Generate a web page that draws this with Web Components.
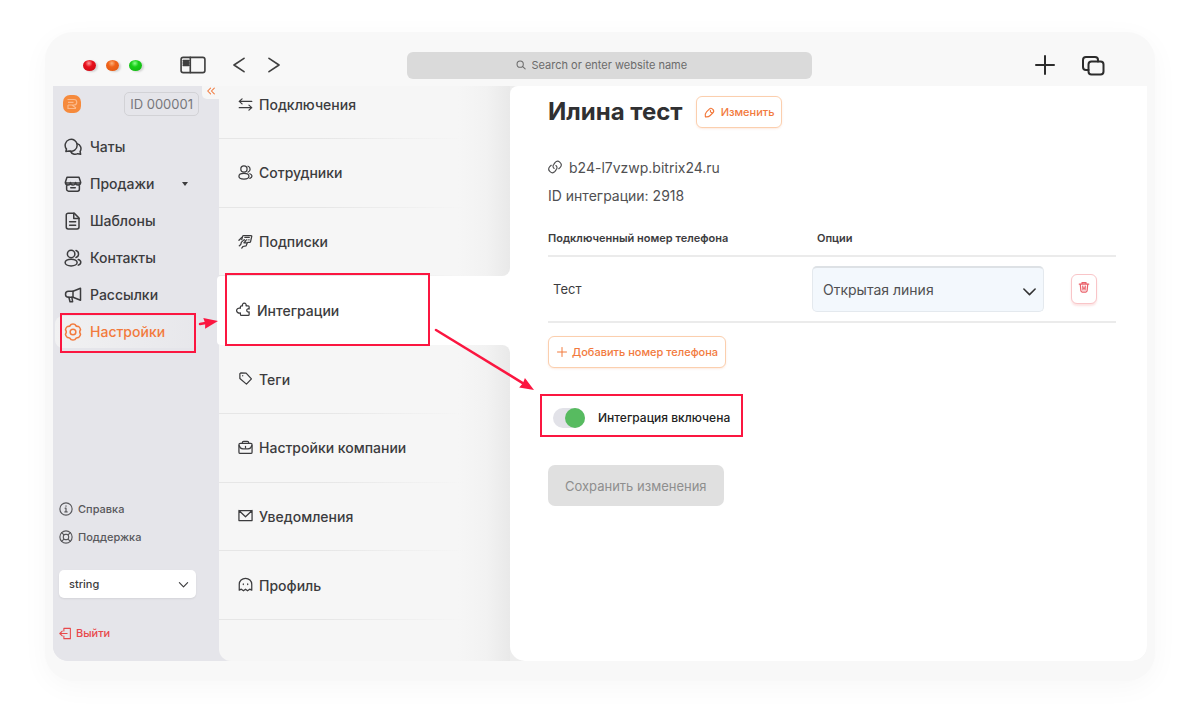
<!DOCTYPE html>
<html lang="ru">
<head>
<meta charset="utf-8">
<meta name="viewport" content="width=device-width, initial-scale=1">
<title>Интеграции</title>
<style>
    body {
        margin: 0;
        min-height: 100vh;
        box-sizing: border-box;
        padding: 32px 45px 46px;
        display: flex;
        flex-direction: column;
        background: #fff;
        color: #3c3c3e;
        font-family: Inter, "Liberation Sans", sans-serif;
        font-size: 14px;
        font-weight: 500;
        line-height: 20px;
        --accent: #f27a3d;
        --danger: #e8484b;
        --mark: #fb1640;
    }
</style>
</head>
<body>
<app-window>
    <window-bar slot="bar"></window-bar>
    <side-nav slot="nav" account="ID 000001">
        <nav-item icon="chats">Чаты</nav-item>
        <nav-item icon="shop" more>Продажи</nav-item>
        <nav-item icon="file">Шаблоны</nav-item>
        <nav-item icon="users">Контакты</nav-item>
        <nav-item icon="megaphone">Рассылки</nav-item>
        <nav-item icon="gear" active>Настройки</nav-item>
        <foot-link slot="foot" icon="info">Справка</foot-link>
        <foot-link slot="foot" icon="support">Поддержка</foot-link>
    </side-nav>
    <settings-menu slot="menu">
        <settings-item icon="swap" first>Подключения</settings-item>
        <settings-item icon="users">Сотрудники</settings-item>
        <settings-item icon="subscribe" before>Подписки</settings-item>
        <settings-item icon="puzzle" active>Интеграции</settings-item>
        <settings-item icon="tag" after>Теги</settings-item>
        <settings-item icon="briefcase">Настройки компании</settings-item>
        <settings-item icon="mail">Уведомления</settings-item>
        <settings-item icon="ghost">Профиль</settings-item>
    </settings-menu>
    <integration-panel heading="Илина тест" domain="b24-l7vzwp.bitrix24.ru" number="2918"></integration-panel>
</app-window>

<script>
const icons = {
    sidebar: '<rect x="1" y="5" width="22" height="14" rx="2"/><path d="M9.500 5v14M3 8h5M3 9.500h5M3 11h5M3 12.500h5"/>',
    back: '<path d="M18 4 6 12l12 8"/>',
    forward: '<path d="m6 4 12 8-12 8"/>',
    plus: '<path d="M12 3v18M3 12h18"/>',
    copy: '<path d="M7.500 17H5a3 3 0 0 1-3-3V7a3 3 0 0 1 3-3h9a3 3 0 0 1 3 3v1.500"/><rect x="7.500" y="8.500" width="15" height="13" rx="3"/>',
    search: '<circle cx="10" cy="10" r="7.500"/><path d="m15.500 15.500 6.500 6"/>',
    collapse: '<path d="m11 5-7 7 7 7M20 5l-7 7 7 7"/>',
    chats: '<path d="M3.300 14.700A8 8 0 1 1 7 17.300L2.500 18z"/><path d="M17.500 7.500a7 7 0 0 1 4 10.500l.7 3.700-3.900-.8A7 7 0 0 1 8.500 17.500"/>',
    shop: '<path d="M4 3h16l2 6v1.500H2V9z"/><path d="M2 10a3.300 3.300 0 0 0 6.600 0 3.300 3.300 0 0 0 6.800 0 3.300 3.300 0 0 0 6.600 0M3.500 13v6a2.500 2.500 0 0 0 2.500 2.500h12a2.500 2.500 0 0 0 2.500-2.500v-6M9 17h6"/>',
    file: '<path d="M13.500 1.500H5.500A2.500 2.500 0 0 0 3 4v16a2.500 2.500 0 0 0 2.500 2.500h12A2.500 2.500 0 0 0 20 20V8z"/><path d="M13 1.500v7h7M7.500 13h8M7.500 17.500h8"/>',
    users: '<circle cx="9.500" cy="6.500" r="5"/><ellipse cx="9.500" cy="18" rx="8" ry="4.500"/><path d="M16 2a4.900 4.900 0 0 1 0 9.300M19 14c4.500 1.500 4.500 6 0 7.500"/>',
    megaphone: '<path d="M22 3v16L12 15H6a4 4 0 0 1 0-8h6z"/><path d="M12 7v8M6.500 15l1.500 6h3.500l-1-6"/>',
    gear: '<path d="M9.500 1.800Q12 .8 14.500 1.800 16 5.200 19.600 4.700 21.700 6.400 22.100 9.100 19.800 12 22.100 14.900 21.700 17.600 19.600 19.300 16 18.800 14.500 22.200 12 23.200 9.500 22.200 8 18.800 4.400 19.300 2.300 17.600 1.900 14.900 4.200 12 1.900 9.100 2.300 6.400 4.400 4.700 8 5.200 9.500 1.800z"/><circle cx="12" cy="12" r="3.800"/>',
    swap: '<path d="M22 7H2m4.500-4L2 7l4.500 4M2 17h20m-4.500-4 4.500 4-4.500 4"/>',
    subscribe: '<path d="M6 9 7.500 3.500q.3-1 1.500-1h12q1.300 0 1 1.300L20 12.500q-.3 1-1.500 1h-3"/><path d="M1.500 10 6 5.500M2 19q3-1 3.500-6L10 9l2.500 2-3 3h5.500M15 14l-2 5-5 1-2 2.500M11 5.500h7M14 9v.5M17.500 9v.5"/>',
    puzzle: '<path d="M7 8q0-2 2-2h1.500a3 3 0 1 1 5.500 0h3.500q1.500 0 1.500 1.500v3.700a2.600 2.600 0 1 0 0 4.600V20q0 1.500-1.500 1.500H9q-2 0-2-2V17.500a4.500 4 0 1 1 0-7.500z"/>',
    tag: '<path d="M3 4.500 4.500 3 13 3.500l8.500 9-8 8.500L3 12z"/><path d="M7.500 7.300v.4"/>',
    briefcase: '<rect x="1.500" y="5.500" width="21" height="16" rx="2"/><path d="M7 5.500V4q0-2 2-2h6q2 0 2 2v1.500M2 9q1 5 6 5h8q5 0 6-5M12 10v2"/>',
    mail: '<path d="M1.500 4h21v16h-21zL12 14 22.500 4"/>',
    ghost: '<path d="M2 21v-9.500a10 9.500 0 0 1 20 0V21l-3.300-1.500L15.300 22 12 19.500 8.700 22l-3.400-2.500z"/><path d="M8.500 11v1M15.500 11v1"/>',
    info: '<circle cx="12" cy="12" r="10.500"/><path d="M10.500 10.500H12V17m-2 0h4M12 6.500v.8"/>',
    support: '<circle cx="12" cy="12" r="10.500"/><rect x="7.500" y="7.500" width="9" height="9" rx="3"/><path d="m4.500 4.500 4 4m7 7 4 4m0-15-4 4m-7 7-4 4"/>',
    exit: '<path d="M9 7.500V2.500h12v19H9v-5M15 12H1.500M6 7.500 1.500 12 6 16.500"/>',
    chevron: '<path d="m3 8 9 9 9-9"/>',
    pencil: '<path d="M3 21.500q-1.500-7 2.500-11l6-6q3.500-3.500 7 0l1 1q3.500 3.500 0 7l-6 6q-4 4-10.500 3z"/><path d="M14 7q-1 5 4 5.500"/>',
    link: '<path d="M10.500 14.500a4.500 4.500 0 0 1-.5-7l2-3a6 6 0 0 1 9 8L18.500 15"/><path d="M13.500 9.500a4.500 4.500 0 0 1 .5 7l-2 3A6 6 0 0 1 3 11.500L5.500 9"/>',
    trash: '<path d="M2.500 6h19M8 6V3h8v3M4.500 6l1.300 13.500Q6 22 8.500 22h7q2.500 0 2.700-2.500L19.500 6M9.500 10l.5 8M14.500 10l-.5 8M10 14h4"/>'
};

class UiIcon extends HTMLElement {
    constructor() {
        super();
        this.attachShadow({mode: 'open'});
    }

    connectedCallback() {
        const size = this.getAttribute('size') || 18;
        const weight = this.getAttribute('weight') || 2;
        this.shadowRoot.innerHTML = `
        <style>
            :host { display: inline-flex; flex: none; }
            svg { display: block; fill: none; stroke: currentColor; stroke-linecap: round; stroke-linejoin: round; }
        </style>
        <svg width="${size}" height="${size}" viewBox="0 0 24 24" stroke-width="${weight}" aria-hidden="true">${icons[this.getAttribute('name')]}</svg>
        `;
    }
}

// Arrow from the host's top left corner, dx/dy pixels away
class MarkArrow extends HTMLElement {
    constructor() {
        super();
        this.attachShadow({mode: 'open'});
    }

    connectedCallback() {
        const dx = parseFloat(this.getAttribute('dx'));
        const dy = parseFloat(this.getAttribute('dy'));
        const length = Math.hypot(dx, dy);
        const angle = Math.atan2(dy, dx) * 180 / Math.PI;
        this.shadowRoot.innerHTML = `
        <style>
            :host { display: block; position: absolute; z-index: 3; width: 1px; height: 1px; pointer-events: none; }
            svg { display: block; overflow: visible; }
        </style>
        <svg width="1" height="1" fill="#fb1640" aria-hidden="true">
            <g transform="rotate(${angle})">
                <path d="M0 0H${length - 8}" stroke="#fb1640" stroke-width="2.500" stroke-linecap="round"/>
                <path d="M${length} 0l-14-5.500 1 5.500-1 5.500z"/>
            </g>
        </svg>
        `;
    }
}

class AppWindow extends HTMLElement {
    constructor() {
        super();
        this.attachShadow({mode: 'open'}).innerHTML = `
        <style>
            :host {
                display: flex;
                flex-direction: column;
                flex: 1;
                border-radius: 28px;
                background: #f8f8f8;
                box-shadow: 0 6px 28px rgba(0, 0, 0, .035);
            }
            .body {
                display: flex;
                flex: 1;
                margin: 0 8px 20px;
                border-radius: 0 0 15px 15px;
                overflow: hidden;
                background: linear-gradient(90deg, #e5e5ea 30%, #ededed 30%);
            }
        </style>
        <slot name="bar"></slot>
        <div class="body">
            <slot name="nav"></slot>
            <slot name="menu"></slot>
            <slot></slot>
        </div>
        `;
    }
}

class WindowBar extends HTMLElement {
    constructor() {
        super();
        this.attachShadow({mode: 'open'}).innerHTML = `
        <style>
            :host { display: flex; align-items: center; height: 42px; padding: 12px 0 0 19px; color: #3f3f3f; }
            .side { display: flex; align-items: center; flex: 1 1 0; min-width: 0; }
            .side.end { justify-content: flex-end; gap: 24px; color: #2c2c2c; }
            .side.end button:last-child { margin-right: 50px; }
            .dots { display: flex; gap: 10px; margin: 0 38px 0 19px; }
            .dot { width: 13px; height: 11px; border-radius: 50%; box-shadow: 2px 1px 2px rgba(0, 0, 0, .15); }
            .red { background: radial-gradient(circle at 45% 30%, #f99, #e8101c 35%, #c40812); }
            .orange { background: radial-gradient(circle at 45% 30%, #fcb07a, #f0641a 35%, #dc5410); }
            .green { background: radial-gradient(circle at 45% 30%, #8f8, #18cf18 35%, #0fae0f); }
            button { display: flex; padding: 0; border: 0; background: none; color: inherit; }
            .nav { display: flex; gap: 15px; margin-left: 23px; }
            label {
                display: flex;
                align-items: center;
                justify-content: center;
                gap: 6px;
                flex: 0 1 405px;
                height: 27px;
                border-radius: 6px;
                background: #dadada;
                color: #6b6b6b;
            }
            input { width: 172px; padding: 0; border: 0; background: none; outline: 0; font: 400 11px/16px Inter, sans-serif; color: inherit; }
            input::placeholder { color: #6b6b6b; opacity: 1; }
        </style>
        <div class="side">
            <div class="dots"><span class="dot red"></span><span class="dot orange"></span><span class="dot green"></span></div>
            <button aria-label="Sidebar"><ui-icon name="sidebar" size="26" weight="1.500"></ui-icon></button>
            <div class="nav">
                <button aria-label="Back"><ui-icon name="back" size="20" weight="2"></ui-icon></button>
                <button aria-label="Forward"><ui-icon name="forward" size="20" weight="2"></ui-icon></button>
            </div>
        </div>
        <label><ui-icon name="search" size="10" weight="2.500"></ui-icon><input type="text" aria-label="Address" placeholder="Search or enter website name"></label>
        <div class="side end">
            <button aria-label="New tab"><ui-icon name="plus" size="24" weight="2"></ui-icon></button>
            <button aria-label="Tabs"><ui-icon name="copy" size="24" weight="2"></ui-icon></button>
        </div>
        `;
    }
}

class SideNav extends HTMLElement {
    constructor() {
        super();
        this.attachShadow({mode: 'open'});
    }

    connectedCallback() {
        this.shadowRoot.innerHTML = `
        <style>
            :host {
                display: flex;
                flex-direction: column;
                position: relative;
                flex: none;
                box-sizing: border-box;
                width: 166px;
                padding: 6px 0 14px;
                background: #e5e5ea;
            }
            .head { display: flex; align-items: center; justify-content: space-between; padding: 0 20px 0 9px; }
            .id {
                padding: 1px 5px;
                border: 1px solid #d2d2d6;
                border-radius: 5px;
                color: #77777c;
                font-size: 13px;
                font-weight: 400;
            }
            .collapse {
                position: absolute;
                top: 0;
                right: 0;
                padding: 0 3px 3px 4px;
                border: 0;
                border-radius: 0 0 0 5px;
                background: #f6f6f6;
                color: var(--accent);
                line-height: 0;
            }
            nav { display: flex; flex-direction: column; gap: 5px; padding: 15px 19px 0 2px; }
            .foot { display: flex; flex-direction: column; margin-top: auto; padding: 0 6px; }
            .select { display: grid; align-items: center; margin: 19px 17px 21px 0; }
            .select > * { grid-area: 1 / 1; }
            .select ui-icon { justify-self: end; margin-right: 7px; pointer-events: none; }
            select {
                appearance: none;
                width: 100%;
                height: 28px;
                padding: 0 10px;
                border: 0;
                border-radius: 5px;
                background: #fff;
                box-shadow: 0 1px 2px rgba(0, 0, 0, .08);
                color: inherit;
                font: 500 11px/16px Inter, sans-serif;
            }
        </style>
        <div class="head">
            <svg width="20" height="20" viewBox="0 0 20 20" aria-hidden="true">
                <rect x="1" y="1" width="18" height="18" rx="7" fill="#f68a3c"/>
                <path d="M5.500 5.500h6.500a2.500 2.500 0 0 1 0 5.500H6m0-2.700h5.500M6 11v3.500h8M10 11l4 3" fill="none" stroke="#fbb98a" stroke-width="1.200"/>
            </svg>
            <span class="id">${this.getAttribute('account')}</span>
        </div>
        <button class="collapse" aria-label="Свернуть"><ui-icon name="collapse" size="10" weight="2.500"></ui-icon></button>
        <nav><slot></slot></nav>
        <div class="foot">
            <slot name="foot"></slot>
            <div class="select">
                <select aria-label="Компания"><option>string</option></select>
                <ui-icon name="chevron" size="11" weight="2.500"></ui-icon>
            </div>
            <foot-link icon="exit" danger>Выйти</foot-link>
        </div>
        `;
    }
}

class NavItem extends HTMLElement {
    constructor() {
        super();
        this.attachShadow({mode: 'open'});
    }

    connectedCallback() {
        const marks = this.hasAttribute('active')
            ? '<span class="mark"></span><mark-arrow dx="18" dy="-3"></mark-arrow>'
            : '';
        this.shadowRoot.innerHTML = `
        <style>
            :host { display: block; position: relative; }
            a {
                display: flex;
                align-items: center;
                gap: 8px;
                height: 32px;
                padding: 0 12px 0 9px;
                border-radius: 8px;
                color: inherit;
                text-decoration: none;
            }
            :host([active]) a { background: linear-gradient(90deg, #f1f1f2, #e7e7eb); color: var(--accent); }
            .caret { margin-left: auto; border: 3px solid transparent; border-top: 4px solid #3c3c3e; border-bottom: 0; }
            .mark { position: absolute; z-index: 3; inset: -3px 4px -5px 5px; border: 2px solid var(--mark); pointer-events: none; }
            mark-arrow { left: 100%; top: 8px; }
        </style>
        <a href="#"><ui-icon name="${this.getAttribute('icon')}"></ui-icon><slot></slot>${this.hasAttribute('more') ? '<i class="caret"></i>' : ''}</a>
        ${marks}
        `;
    }
}

class FootLink extends HTMLElement {
    constructor() {
        super();
        this.attachShadow({mode: 'open'});
    }

    connectedCallback() {
        this.shadowRoot.innerHTML = `
        <style>
            :host { display: block; font-size: 11px; color: #58585c; }
            a { display: flex; align-items: center; gap: 5px; height: 28px; color: inherit; text-decoration: none; }
            :host([danger]) { color: var(--danger); }
            :host([danger]) a { gap: 4px; }
        </style>
        <a href="#"><ui-icon name="${this.getAttribute('icon')}" size="${this.hasAttribute('danger') ? 13 : 14}"></ui-icon><slot></slot></a>
        `;
    }
}

class SettingsMenu extends HTMLElement {
    constructor() {
        super();
        this.attachShadow({mode: 'open'}).innerHTML = `
        <style>
            :host { display: flex; flex-direction: column; flex: 0 0 291px; background: linear-gradient(90deg, transparent 50%, #fff 50%) 0 0 / 100% 90% no-repeat; }
            .rest { flex: 0 0 41px; border-radius: 0 0 0 12px; background: linear-gradient(90deg, #f6f6f6 82%, #f2f2f2 92%, #e9e9e9); }
        </style>
        <slot></slot>
        <div class="rest"></div>
        `;
    }
}

class SettingsItem extends HTMLElement {
    constructor() {
        super();
        this.attachShadow({mode: 'open'});
    }

    connectedCallback() {
        const marks = this.hasAttribute('active')
            ? '<span class="mark"></span><mark-arrow dx="98" dy="60"></mark-arrow>'
            : '';
        this.shadowRoot.innerHTML = `
        <style>
            :host {
                display: flex;
                flex: 1;
                position: relative;
                background:
                    linear-gradient(90deg, #e6e6e6 35%, transparent 85%) 0 100% / 100% 1px no-repeat,
                    linear-gradient(90deg, #f6f6f6 82%, #f2f2f2 92%, #e9e9e9);
            }
            :host([first]) { flex: 0 0 53px; align-items: flex-start; }
            :host([before]) { border-radius: 0 0 8px 0; }
            :host([after]) { border-radius: 0 8px 0 0; }
            :host([active]) { z-index: 2; margin-left: -2px; border-radius: 4px 0 0 4px; background: #fff; }
            a { display: flex; align-items: center; flex: 1; gap: 6px; padding: 0 19px; color: inherit; text-decoration: none; }
            ui-icon { margin-bottom: 2px; }
            :host([first]) a { padding-top: 9px; }
            .mark { position: absolute; z-index: 3; inset: -3px 80px -1px 8px; border: 2px solid var(--mark); pointer-events: none; }
            mark-arrow { right: 73px; top: 54px; }
        </style>
        <a href="#"><ui-icon name="${this.getAttribute('icon')}" size="15"></ui-icon><slot></slot></a>
        ${marks}
        `;
    }
}

class IntegrationPanel extends HTMLElement {
    constructor() {
        super();
        this.attachShadow({mode: 'open'});
    }

    connectedCallback() {
        this.shadowRoot.innerHTML = `
        <style>
            :host {
                display: block;
                flex: 1;
                min-width: 0;
                padding: 10px 31px 20px 38px;
                border-radius: 8px 0 0 15px;
                background: #fff;
                color: #505052;
            }
            button { box-sizing: border-box; font: 500 11px/16px Inter, sans-serif; }
            .head { display: flex; align-items: center; gap: 13px; }
            h1 { margin: 0; color: #303032; font-size: 24px; font-weight: 700; line-height: 32px; }
            .outline {
                display: flex;
                align-items: center;
                gap: 6px;
                height: 32px;
                padding: 0 7px;
                border: 1px solid #fbcfae;
                border-radius: 6px;
                background: #fff;
                box-shadow: 0 1px 2px rgba(242, 122, 61, .15);
                color: var(--accent);
            }
            .info { display: flex; flex-direction: column; gap: 8px; margin: 30px 0 21px; font-weight: 400; }
            .info a { display: flex; align-items: center; gap: 7px; color: inherit; text-decoration: none; }
            .info ui-icon { margin-bottom: 2px; }
            table { width: 100%; border-collapse: collapse; table-layout: fixed; }
            th { padding: 3px 0 9px; text-align: left; color: #3c3c3e; font-size: 11px; font-weight: 600; line-height: 16px; }
            th + th { padding-left: 5px; }
            tr { border-bottom: 2px solid #ebebeb; }
            td { height: 64px; padding: 0; }
            .phone { width: 264px; }
            .action { box-sizing: border-box; width: 45px; }
            td.name { padding-left: 5px; color: #3c3c3e; font-size: 13px; font-weight: 400; }
            .select { display: grid; align-items: center; margin-right: 27px; }
            .select > * { grid-area: 1 / 1; }
            .select ui-icon { justify-self: end; margin: 4px 7px 0; color: #333; pointer-events: none; }
            select {
                appearance: none;
                width: 100%;
                height: 46px;
                padding: 0 10px;
                border: 1px solid #e4e9ee;
                border-top: 2px solid #dde1e5;
                border-radius: 5px;
                background: #f3f8fd;
                color: #505052;
                font: 400 14px/20px Inter, sans-serif;
            }
            .delete {
                display: flex;
                justify-content: center;
                width: 26px;
                height: 30px;
                padding: 6px 0 0;
                border: 1px solid #f9c5c8;
                border-radius: 6px;
                background: #fff;
                box-shadow: 0 2px 2px rgba(232, 72, 75, .15);
                color: #ea6069;
            }
            .add { gap: 4px; margin-top: 13px; }
            .toggle { display: flex; align-items: center; gap: 13px; position: relative; width: max-content; margin: 40px 5px 37px; color: #222; font-size: 12px; font-weight: 500; }
            .toggle::after { content: ""; position: absolute; inset: -14px -13px -9px; border: 2px solid var(--mark); pointer-events: none; }
            input { appearance: none; display: flex; justify-content: flex-end; width: 32px; height: 20px; margin: 0; border-radius: 10px; background: #e2e2e8; }
            input::before { content: ""; width: 20px; height: 20px; border-radius: 50%; background: #57bb60; }
            input:not(:checked) { justify-content: flex-start; }
            .save { height: 41px; padding: 0 17px; border: 0; border-radius: 7px; background: #e0e0e0; color: #8e8e8e; font-size: 13px; font-weight: 400; }
        </style>
        <div class="head">
            <h1>${this.getAttribute('heading')}</h1>
            <button class="outline"><ui-icon name="pencil" size="11" weight="2.500"></ui-icon>Изменить</button>
        </div>
        <div class="info">
            <a href="#"><ui-icon name="link" size="14"></ui-icon>${this.getAttribute('domain')}</a>
            <span>ID интеграции: ${this.getAttribute('number')}</span>
        </div>
        <table>
            <thead>
                <tr><th class="phone">Подключенный номер телефона</th><th>Опции</th><th class="action"></th></tr>
            </thead>
            <tbody>
                <tr>
                    <td class="name">Тест</td>
                    <td>
                        <div class="select">
                            <select aria-label="Опции"><option>Открытая линия</option></select>
                            <ui-icon name="chevron" size="15" weight="2.500"></ui-icon>
                        </div>
                    </td>
                    <td><button class="delete" aria-label="Удалить"><ui-icon name="trash" size="12" weight="2.500"></ui-icon></button></td>
                </tr>
            </tbody>
        </table>
        <button class="outline add"><ui-icon name="plus" size="12"></ui-icon>Добавить номер телефона</button>
        <label class="toggle"><input type="checkbox" checked>Интеграция включена</label>
        <button class="save" disabled>Сохранить изменения</button>
        `;
    }
}

customElements.define('ui-icon', UiIcon);
customElements.define('mark-arrow', MarkArrow);
customElements.define('app-window', AppWindow);
customElements.define('window-bar', WindowBar);
customElements.define('side-nav', SideNav);
customElements.define('nav-item', NavItem);
customElements.define('foot-link', FootLink);
customElements.define('settings-menu', SettingsMenu);
customElements.define('settings-item', SettingsItem);
customElements.define('integration-panel', IntegrationPanel);
</script>
</body>
</html>
